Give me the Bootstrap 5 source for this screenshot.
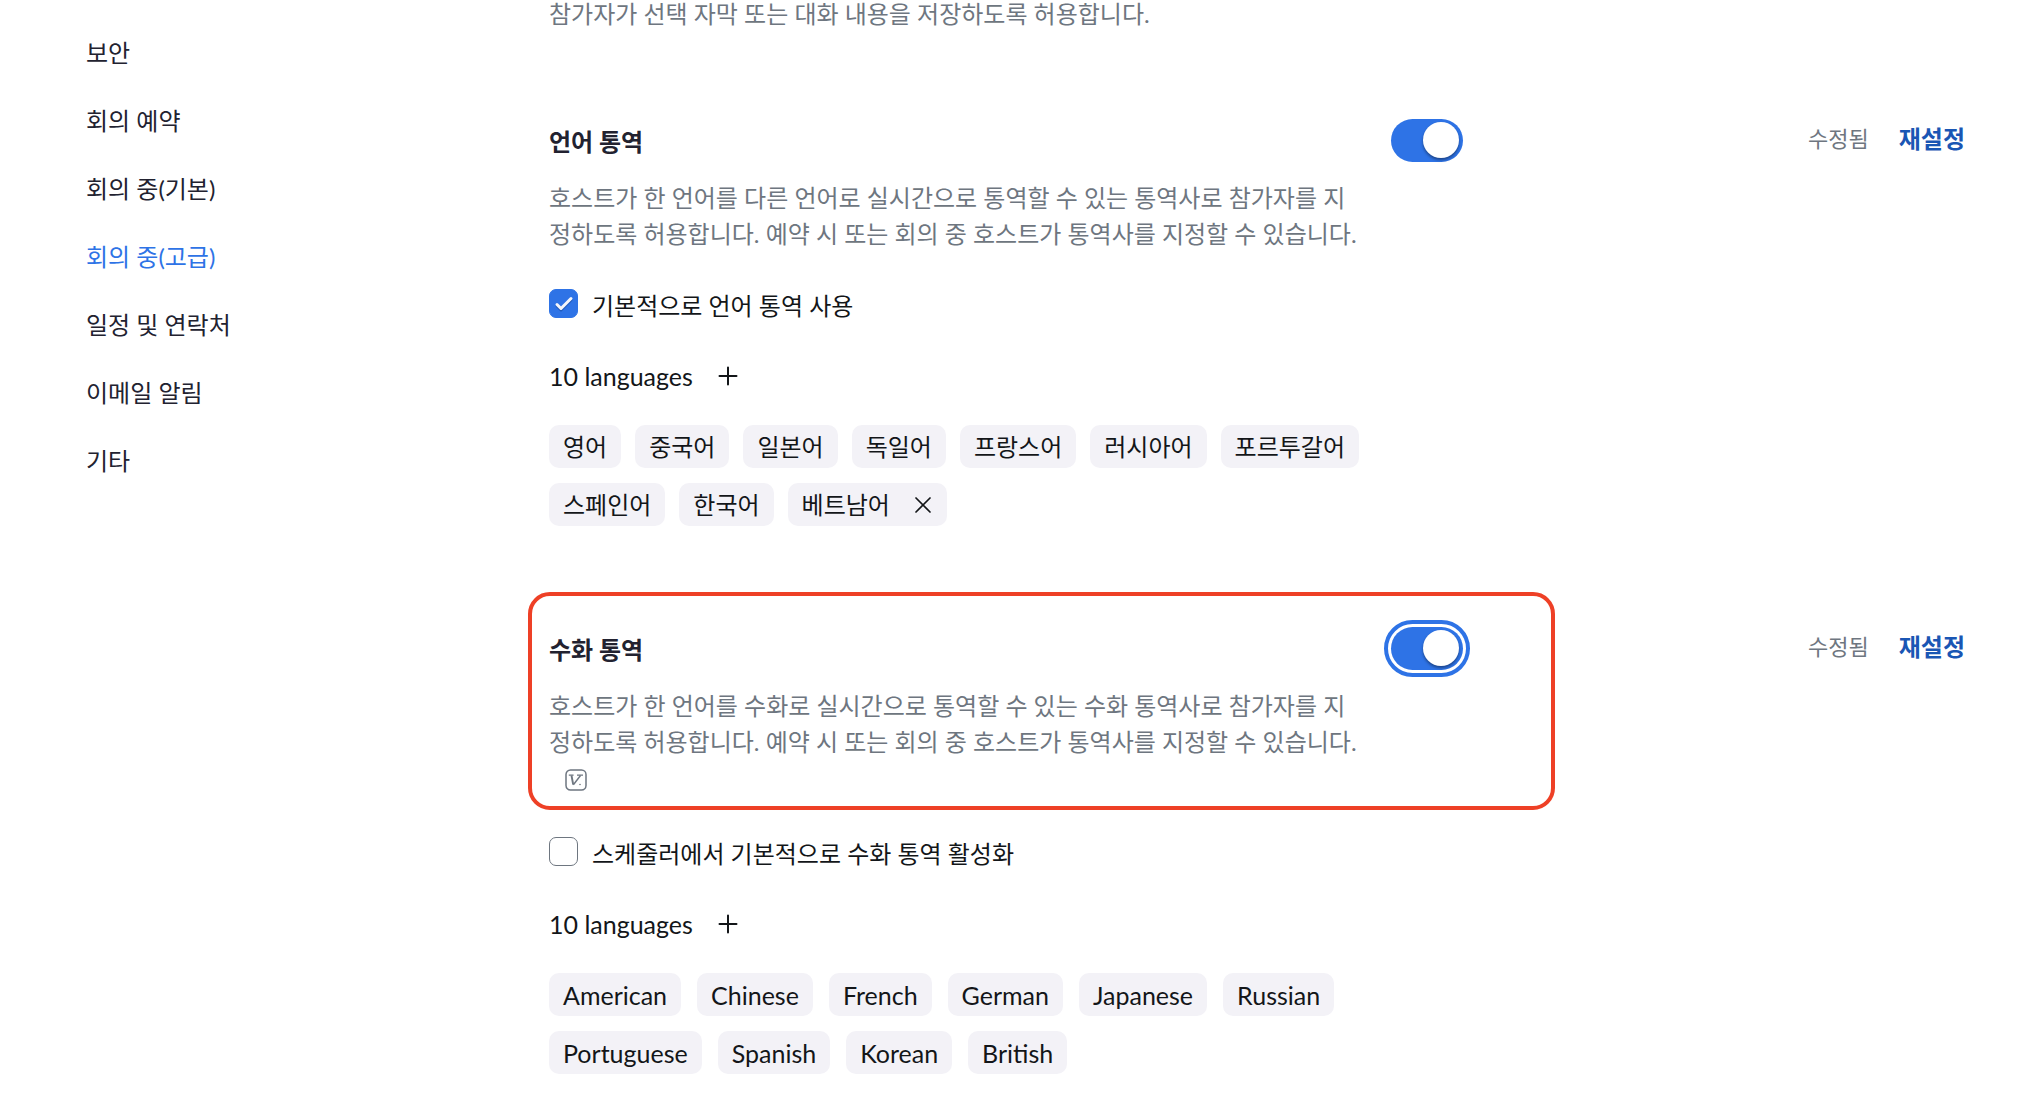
<!DOCTYPE html>
<html lang="ko">
<head>
<meta charset="utf-8">
<meta name="viewport" content="width=device-width, initial-scale=1">
<title>회의 설정</title>
<link href="https://cdn.jsdelivr.net/npm/bootstrap@5.3.0/dist/css/bootstrap.min.css" rel="stylesheet">
<style>
  :root {
    --zm-blue: #2e73e6;
    --zm-ink: #222230;
    --zm-text: #131619;
    --zm-muted: #6e7680;
  }
  body {
    font-family: Lato, "Noto Sans CJK KR", sans-serif;
    font-size: 24px;
    line-height: 36px;
    color: var(--zm-text);
    background: #fff;
  }
  .side-menu { flex: 0 0 528px; padding: 35px 0 0 86px; gap: 32px; }
  .side-menu .nav-link { padding: 0; color: var(--zm-ink); }
  .side-menu .nav-link.active { color: var(--zm-blue); }
  .settings { padding-right: 71px; min-width: 0; }
  .inset { padding-left: 21px; }
  .desc { color: var(--zm-muted); max-width: 808px; margin: 0; }
  .desc-prev { line-height: 28px; margin-bottom: 56px; }
  .setting + .setting { margin-top: 66px; }
  .setting-head {
    flex: 0 1 1027px;
    border: 4px solid transparent;
    border-radius: 22px;
    padding: 31px 88px 6px 17px;
  }
  .setting-head.highlighted { border-color: #ee4026; }
  .setting-title { font-size: 24px; line-height: 46px; font-weight: 700; color: var(--zm-ink); margin: 0; }
  .title-row { margin-bottom: 15px; gap: 24px; }
  .form-check-input.toggle {
    position: relative;
    float: none;
    flex: none;
    width: 72px;
    height: 43px;
    margin: 0;
    border: 0;
    border-radius: 22px;
    background: #98a0a9;
  }
  .form-check-input.toggle:checked { background: var(--zm-blue); }
  .form-check-input.toggle::after {
    content: "";
    position: absolute;
    top: 3px;
    left: 4px;
    width: 36px;
    height: 36px;
    border-radius: 50%;
    background: #fff;
    box-shadow: 0 2px 3px rgba(0, 0, 0, .4);
  }
  .form-check-input.toggle:checked::after { left: 32px; }
  .form-check-input.toggle.ringed { outline: 4px solid var(--zm-blue); outline-offset: 3px; box-shadow: none; }
  .badge-line { height: 40px; padding-left: 16px; color: var(--zm-muted); }
  .state-col { padding-top: 37px; gap: 30px; }
  .state-text { font-size: 22px; color: var(--zm-muted); }
  .reset-link { color: #1a56b4; font-weight: 700; text-decoration: none; }
  .option { margin-top: 27px; gap: 14px; line-height: 34px; }
  .form-check-input.tick {
    float: none;
    flex: none;
    width: 29px;
    height: 29px;
    margin: 0;
    border: 1px solid #6e7680;
    border-radius: 7px;
  }
  .form-check-input.tick:checked {
    border-color: var(--zm-blue);
    background-color: var(--zm-blue);
    background-size: 29px 29px;
    background-image: url("data:image/svg+xml,%3csvg xmlns='http://www.w3.org/2000/svg' viewBox='0 0 29 29'%3e%3cpath d='M8 17l4 4 10-10' fill='none' stroke='%23123f8c' stroke-opacity='.45' stroke-width='3' stroke-linecap='round' stroke-linejoin='round'/%3e%3cpath d='M8 15.500l4 4 10-10' fill='none' stroke='%23f4f6fa' stroke-width='3' stroke-linecap='round' stroke-linejoin='round'/%3e%3c/svg%3e");
  }
  .count-row { margin-top: 35px; gap: 24px; font-size: 25px; }
  .glyph-btn { border: 0; padding: 0; background: none; color: inherit; line-height: 0; }
  .chips { margin: 31px 0 0; gap: 15px 14px; max-width: 816px; list-style: none; }
  .chips-latin { font-size: 25px; column-gap: 16px; }
  .chip { display: flex; align-items: center; gap: 23px; height: 43px; padding: 0 14px; border-radius: 10px; background: #f3f2f7; }
</style>
</head>
<body>
<div class="d-flex align-items-start">
  <nav class="side-menu nav flex-column" aria-label="설정">
    <a class="nav-link" href="#">보안</a>
    <a class="nav-link" href="#">회의 예약</a>
    <a class="nav-link" href="#">회의 중(기본)</a>
    <a class="nav-link active" aria-current="page" href="#">회의 중(고급)</a>
    <a class="nav-link" href="#">일정 및 연락처</a>
    <a class="nav-link" href="#">이메일 알림</a>
    <a class="nav-link" href="#">기타</a>
  </nav>

  <main class="settings flex-grow-1">
    <div class="inset"><p class="desc desc-prev">참가자가 선택 자막 또는 대화 내용을 저장하도록 허용합니다.</p></div>

    <section class="setting">
      <div class="d-flex justify-content-between align-items-start">
        <div class="setting-head">
          <div class="title-row d-flex justify-content-between">
            <h2 class="setting-title"><label for="langSwitch">언어 통역</label></h2>
            <input class="form-check-input toggle" type="checkbox" role="switch" id="langSwitch" checked>
          </div>
          <p class="desc">호스트가 한 언어를 다른 언어로 실시간으로 통역할 수 있는 통역사로 참가자를 지정하도록 허용합니다. 예약 시 또는 회의 중 호스트가 통역사를 지정할 수 있습니다.</p>
        </div>
        <div class="state-col d-flex">
          <span class="state-text">수정됨</span>
          <a class="reset-link" href="#">재설정</a>
        </div>
      </div>
      <div class="inset">
        <div class="option d-flex">
          <input class="form-check-input tick" type="checkbox" id="langDefault" checked>
          <label for="langDefault">기본적으로 언어 통역 사용</label>
        </div>
        <div class="count-row d-flex align-items-center">
          <span>10 languages</span>
          <button class="glyph-btn" type="button" aria-label="언어 추가">
            <svg width="22" height="22" viewBox="0 0 22 22" fill="none" stroke="currentColor" stroke-width="2" stroke-linecap="round"><path d="M11 2.500v17M2.500 11h17"/></svg>
          </button>
        </div>
        <ul class="chips d-flex flex-wrap p-0">
          <li class="chip">영어</li>
          <li class="chip">중국어</li>
          <li class="chip">일본어</li>
          <li class="chip">독일어</li>
          <li class="chip">프랑스어</li>
          <li class="chip">러시아어</li>
          <li class="chip">포르투갈어</li>
          <li class="chip">스페인어</li>
          <li class="chip">한국어</li>
          <li class="chip">베트남어
            <button class="glyph-btn" type="button" aria-label="베트남어 삭제">
              <svg width="20" height="20" viewBox="0 0 20 20" fill="none" stroke="currentColor" stroke-width="1.700" stroke-linecap="round"><path d="M3 3l14 14M17 3L3 17"/></svg>
            </button>
          </li>
        </ul>
      </div>
    </section>

    <section class="setting">
      <div class="d-flex justify-content-between align-items-start">
        <div class="setting-head highlighted">
          <div class="title-row d-flex justify-content-between">
            <h2 class="setting-title"><label for="signSwitch">수화 통역</label></h2>
            <input class="form-check-input toggle ringed" type="checkbox" role="switch" id="signSwitch" checked>
          </div>
          <p class="desc">호스트가 한 언어를 수화로 실시간으로 통역할 수 있는 수화 통역사로 참가자를 지정하도록 허용합니다. 예약 시 또는 회의 중 호스트가 통역사를 지정할 수 있습니다.</p>
          <div class="badge-line d-flex align-items-center">
            <svg width="22" height="22" viewBox="0 0 22 22" fill="none" stroke="currentColor" aria-hidden="true">
              <rect x="1" y="1" width="20" height="20" rx="4.500" stroke-width="1.500"/>
              <path d="M3.800 6.200h4.800M12 6.200h6" stroke-width="1.300"/>
              <path d="M6.500 6.500l1.700 9.200" stroke-width="1.900"/>
              <path d="M8.400 15.700L15.500 6.500" stroke-width="1.400"/>
              <circle cx="15" cy="15.500" r=".8" fill="currentColor" stroke="none"/>
            </svg>
          </div>
        </div>
        <div class="state-col d-flex">
          <span class="state-text">수정됨</span>
          <a class="reset-link" href="#">재설정</a>
        </div>
      </div>
      <div class="inset">
        <div class="option d-flex">
          <input class="form-check-input tick" type="checkbox" id="signDefault">
          <label for="signDefault">스케줄러에서 기본적으로 수화 통역 활성화</label>
        </div>
        <div class="count-row d-flex align-items-center">
          <span>10 languages</span>
          <button class="glyph-btn" type="button" aria-label="수화 추가">
            <svg width="22" height="22" viewBox="0 0 22 22" fill="none" stroke="currentColor" stroke-width="2" stroke-linecap="round"><path d="M11 2.500v17M2.500 11h17"/></svg>
          </button>
        </div>
        <ul class="chips chips-latin d-flex flex-wrap p-0">
          <li class="chip">American</li>
          <li class="chip">Chinese</li>
          <li class="chip">French</li>
          <li class="chip">German</li>
          <li class="chip">Japanese</li>
          <li class="chip">Russian</li>
          <li class="chip">Portuguese</li>
          <li class="chip">Spanish</li>
          <li class="chip">Korean</li>
          <li class="chip">British</li>
        </ul>
      </div>
    </section>
  </main>
</div>
<script src="https://cdn.jsdelivr.net/npm/bootstrap@5.3.0/dist/js/bootstrap.bundle.min.js"></script>
</body>
</html>
